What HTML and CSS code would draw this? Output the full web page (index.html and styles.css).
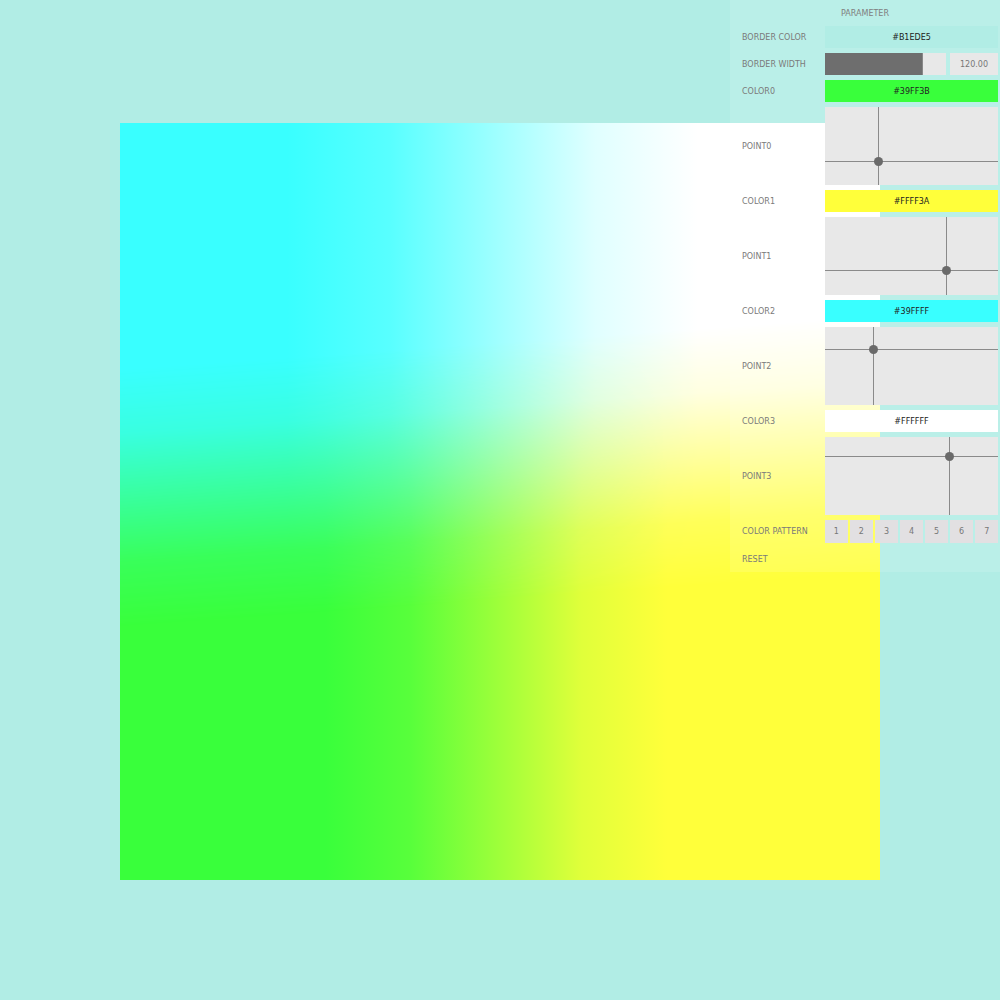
FILE: index.html
```html
<!DOCTYPE html>
<html>
<head>
<meta charset="utf-8">
<link rel="stylesheet" href="styles.css">
</head>
<body>
<div class="stage">
  <div class="mesh">
    <div class="mesh-bottom"></div>
    <div class="mesh-top"></div>
  </div>
</div>
<div class="panel">
  <div class="title">PARAMETER</div>
  <div class="row"><div class="label">BORDER COLOR</div><div class="swatch sw-border">#B1EDE5</div></div>
  <div class="row"><div class="label">BORDER WIDTH</div>
    <div class="slider-wrap"><div class="track"><div class="fill" style="width:97px"></div></div><div class="num">120.00</div></div>
  </div>
  <div class="row"><div class="label">COLOR0</div><div class="swatch sw-green">#39FF3B</div></div>
  <div class="row"><div class="label">POINT0</div>
    <div class="pad"><div class="vline" style="left:53px"></div><div class="hline" style="top:54px"></div><div class="knob" style="left:53px;top:54px"></div></div>
  </div>
  <div class="row"><div class="label">COLOR1</div><div class="swatch sw-yellow">#FFFF3A</div></div>
  <div class="row"><div class="label">POINT1</div>
    <div class="pad"><div class="vline" style="left:121px"></div><div class="hline" style="top:53px"></div><div class="knob" style="left:121px;top:53px"></div></div>
  </div>
  <div class="row"><div class="label">COLOR2</div><div class="swatch sw-cyan">#39FFFF</div></div>
  <div class="row"><div class="label">POINT2</div>
    <div class="pad"><div class="vline" style="left:48px"></div><div class="hline" style="top:22px"></div><div class="knob" style="left:48px;top:22px"></div></div>
  </div>
  <div class="row"><div class="label">COLOR3</div><div class="swatch sw-white">#FFFFFF</div></div>
  <div class="row"><div class="label">POINT3</div>
    <div class="pad"><div class="vline" style="left:124px"></div><div class="hline" style="top:19px"></div><div class="knob" style="left:124px;top:19px"></div></div>
  </div>
  <div class="row"><div class="label">COLOR PATTERN</div>
    <div class="buttons">
      <div class="btn">1</div><div class="btn">2</div><div class="btn">3</div><div class="btn">4</div><div class="btn">5</div><div class="btn">6</div><div class="btn">7</div>
    </div>
  </div>
  <div class="row row-last"><div class="label label-reset">RESET</div></div>
</div>
</body>
</html>
```
FILE: styles.css
```css
html, body {
  margin: 0;
  padding: 0;
  width: 1000px;
  height: 1000px;
  background: #B1EDE5;
  font-family: "DejaVu Sans", Verdana, sans-serif;
  overflow: hidden;
}
.stage {
  display: flex;
  padding: 123px 120px 120px 120px;
}
.mesh {
  position: relative;
  width: 760px;
  height: 757px;
}
.mesh-bottom, .mesh-top {
  position: absolute;
  inset: 0;
}
.mesh-bottom {
  background: linear-gradient(to right,
    rgb(57,255,59) 27%,
    rgb(88,255,59) 38.25%,
    rgb(156,255,58) 49.5%,
    rgb(224,255,58) 60.75%,
    rgb(255,255,58) 72%);
}
.mesh-top {
  background: linear-gradient(to right,
    rgb(57,255,255) 22%,
    rgb(88,255,255) 35.5%,
    rgb(156,255,255) 49%,
    rgb(224,255,255) 62.5%,
    rgb(255,255,255) 76%);
  -webkit-mask-image: linear-gradient(176deg,
    rgba(0,0,0,1) 30.4%,
    rgba(0,0,0,0.844) 38.35%,
    rgba(0,0,0,0.5) 46.3%,
    rgba(0,0,0,0.156) 54.25%,
    rgba(0,0,0,0) 62.2%);
  mask-image: linear-gradient(176deg,
    rgba(0,0,0,1) 30.4%,
    rgba(0,0,0,0.844) 38.35%,
    rgba(0,0,0,0.5) 46.3%,
    rgba(0,0,0,0.156) 54.25%,
    rgba(0,0,0,0) 62.2%);
}
.panel {
  position: absolute;
  top: 0;
  right: 0;
  width: 270px;
  background: rgba(255, 255, 255, 0.12);
  display: flex;
  flex-direction: column;
  font-size: 8px;
  color: #777;
}
.title {
  height: 26px;
  display: flex;
  align-items: center;
  justify-content: center;
  color: #808080;
}
.row {
  display: grid;
  grid-template-columns: 95px 173px;
  align-items: center;
  padding-bottom: 5px;
}
.row-last {
  padding-bottom: 2px;
  height: 22px;
}
.label {
  padding-left: 12px;
  color: #7a7a7a;
  white-space: nowrap;
}
.swatch {
  height: 22px;
  display: flex;
  align-items: center;
  justify-content: center;
  color: #222;
}
.sw-border { background: #B1EDE5; }
.sw-green { background: #39FF3B; }
.sw-yellow { background: #FFFF3A; }
.sw-cyan { background: #39FFFF; }
.sw-white { background: #FFFFFF; }
.slider-wrap {
  display: flex;
  gap: 4px;
  height: 22px;
}
.track {
  width: 121px;
  background: #E8E8E8;
  display: flex;
}
.fill {
  background: #6E6E6E;
  border-right: 1px solid #888;
}
.num {
  flex: 1;
  background: #E8E8E8;
  display: flex;
  align-items: center;
  justify-content: center;
  color: #777;
}
.pad {
  position: relative;
  height: 78px;
  background: #E8E8E8;
}
.vline {
  position: absolute;
  top: 0;
  bottom: 0;
  width: 1px;
  background: #8a8a8a;
}
.hline {
  position: absolute;
  left: 0;
  right: 0;
  height: 1px;
  background: #8a8a8a;
}
.knob {
  position: absolute;
  width: 9px;
  height: 9px;
  margin-left: -4px;
  margin-top: -4px;
  border-radius: 50%;
  background: #6a6a6a;
}
.buttons {
  display: flex;
  gap: 2.4px;
  height: 23px;
}
.btn {
  flex: 1;
  background: #E2E0E2;
  display: flex;
  align-items: center;
  justify-content: center;
  color: #777;
}
```
